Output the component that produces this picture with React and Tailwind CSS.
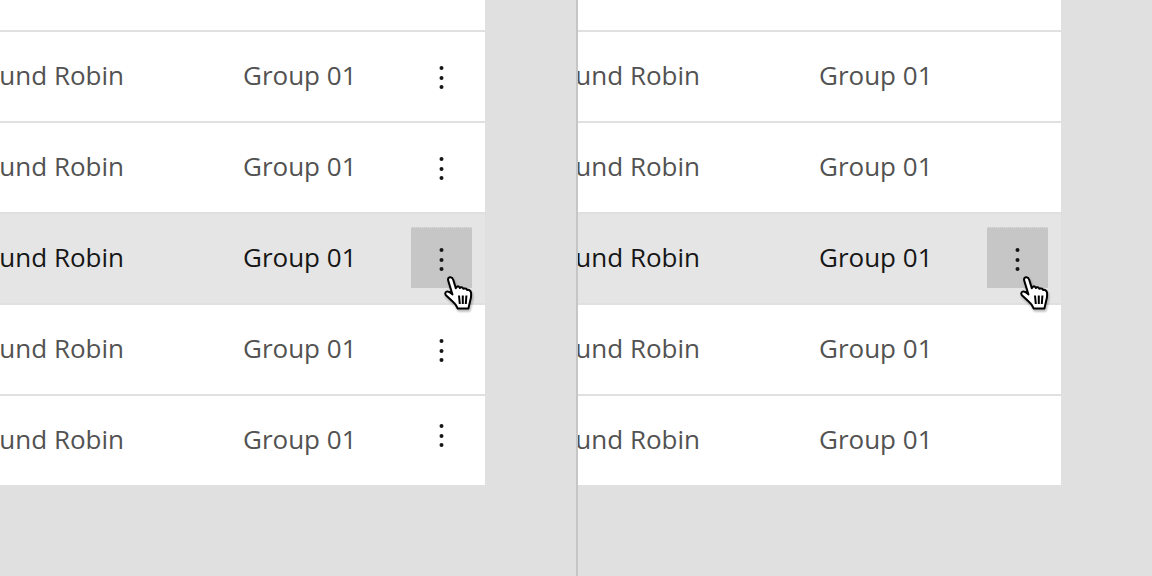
import React from "react";

const Dots = ({ className = "" }) => (
    <svg width="32" height="32" viewBox="0 0 32 32" className={`fill-[#161616] ${className}`}>
        <circle cx="15.5" cy="8" r="2" />
        <circle cx="15.5" cy="18" r="2" />
        <circle cx="15.5" cy="27" r="2" />
    </svg>
);

const HandCursor = () => (
    <svg
        width="30"
        height="36"
        viewBox="0 0 30 36"
        className="absolute left-[33px] top-[47px] drop-shadow-[1px_2px_1px_rgba(0,0,0,0.3)]"
    >
        <path
            d="M4.2 5.5C3.6 3.4 5 2 6.6 2.2 8 2.4 8.8 3.4 9.3 5L11.8 13.2 13.2 11.6C14.2 11 15.4 11.6 15.8 13 16.8 11.8 18.6 12.2 19.4 13.8 20.6 13 22.4 13.6 23.2 15 24.8 14.4 26.8 15.6 27 17.6 27.3 20.4 27 23.2 26.2 25.6L24.4 33.6H13.8C12.8 30.4 10.8 28.2 8.4 26.2L2.2 20.6C0.8 19.2 1 17.2 2.6 16.6 4.2 16 6.2 17 8.4 19.4Z"
            fill="#fff"
            stroke="#000"
            strokeWidth="2"
            strokeLinejoin="round"
        />
        <path d="M15 20.5L15.8 29M18.8 20.5V29M22.4 20.5L21.8 29" fill="none" stroke="#000" strokeWidth="2" />
    </svg>
);

const Row = ({ active, hovered, showMenu, raised }) => (
    <div
        className={`flex h-[91px] border-t-2 border-[#e0e0e0] ${
            active ? "bg-[#e5e5e5] text-[#161616]" : "bg-white text-[#525252]"
        }`}
    >
        <div className="flex min-w-0 flex-1 items-center justify-end overflow-hidden whitespace-nowrap pb-[2px] pr-[119px]">
            Round Robin
        </div>
        <div className="flex w-[168px] items-center pb-[2px]">Group 01</div>
        <div className="w-[74px] pt-[13px]">
            {(showMenu || hovered) && (
                <div
                    className={`relative flex h-[61px] w-[61px] items-center justify-center ${
                        hovered ? "border-t border-dotted border-[#dcdcdc] bg-[#c6c6c6]" : ""
                    }`}
                >
                    <Dots className={raised ? "-translate-y-[6px]" : ""} />
                    {hovered && <HandCursor />}
                </div>
            )}
        </div>
    </div>
);

const Panel = ({ showMenu, className }) => (
    <div className={className}>
        <div className="h-[30px] bg-white" />
        {[0, 1, 2, 3, 4].map((i) => (
            <Row key={i} active={i === 2} hovered={i === 2} showMenu={showMenu} raised={i === 4} />
        ))}
    </div>
);

export default function App() {
    return (
        <div className="flex h-[576px] w-[1152px] overflow-hidden bg-[#e0e0e0] font-['Open_Sans',sans-serif] text-[26px]">
            <div className="w-[576px]">
                <Panel showMenu className="w-[485px]" />
            </div>
            <div className="w-[2px] bg-[#c6c6c6]" />
            <Panel className="w-[483px]" />
        </div>
    );
}
